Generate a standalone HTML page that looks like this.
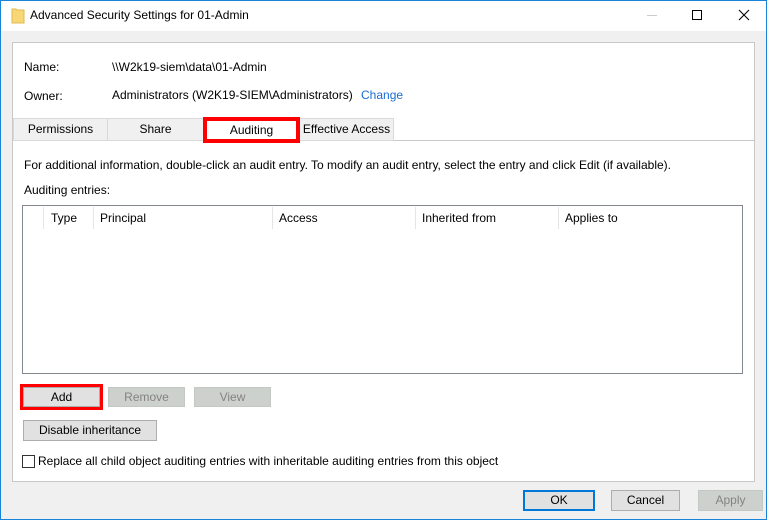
<!DOCTYPE html>
<html><head><style>
*{box-sizing:border-box;margin:0;padding:0}
body{width:767px;height:520px;background:#f0f0f0;font-family:"Liberation Sans",sans-serif;font-size:12px;color:#000;position:relative;overflow:hidden}
.a{position:absolute;white-space:nowrap}
.win{position:absolute;left:0;top:0;width:767px;height:520px;border:1px solid #1883d7}
.btn{position:absolute;background:#e1e1e1;border:1px solid #adadad;text-align:center;line-height:18px}
.dis{background:#cdd1ce;border-color:#c4c8c5;color:#838383}
.tab{position:absolute;top:118px;height:23px;background:#f0f0f0;border:1px solid #d9d9d9;text-align:center;line-height:21px}
</style></head><body>
<div class="a" style="left:0;top:0;width:767px;height:31px;background:#fff"></div>
<div class="win"></div>
<svg class="a" style="left:11px;top:8px" width="14" height="16"><path d="M1 1h4l1 1h7v13H1z" fill="#f8d775" stroke="#e0b94f"/></svg>
<div class="a" style="left:30px;top:8px;font-size:12px">Advanced Security Settings for 01-Admin</div>
<div class="a" style="left:647px;top:15px;width:10px;height:1px;background:#ccc"></div>
<div class="a" style="left:692px;top:10px;width:10px;height:10px;border:1px solid #000"></div>
<svg class="a" style="left:738px;top:9px" width="12" height="12"><path d="M1 1L11 11M11 1L1 11" stroke="#000" stroke-width="1.1"/></svg>
<div class="a" style="left:12px;top:42px;width:743px;height:440px;background:#fff;border:1px solid #c8c8c8"></div>
<div class="a" style="left:24px;top:60px">Name:</div>
<div class="a" style="left:112px;top:60px">\\W2k19-siem\data\01-Admin</div>
<div class="a" style="left:24px;top:89px">Owner:</div>
<div class="a" style="left:112px;top:88px">Administrators (W2K19-SIEM\Administrators)</div>
<div class="a" style="left:361px;top:88px;color:#1a6dd1">Change</div>
<div class="a" style="left:13px;top:140px;width:741px;height:1px;background:#c8c8c8"></div>
<div class="tab" style="left:13px;width:95px">Permissions</div>
<div class="tab" style="left:107px;width:97px">Share</div>
<div class="tab" style="left:299px;width:95px">Effective Access</div>
<div class="a" style="left:203px;top:117px;width:97px;height:26px;background:#fff;border:4px solid #f00;text-align:center;line-height:18px">Auditing</div>
<div class="a" style="left:24px;top:158px">For additional information, double-click an audit entry. To modify an audit entry, select the entry and click Edit (if available).</div>
<div class="a" style="left:24px;top:183px">Auditing entries:</div>
<div class="a" style="left:22px;top:205px;width:721px;height:169px;border:1px solid #828790;background:#fff"></div>
<div class="a" style="left:43px;top:207px;width:1px;height:22px;background:#e5e5e5"></div>
<div class="a" style="left:93px;top:207px;width:1px;height:22px;background:#e5e5e5"></div>
<div class="a" style="left:272px;top:207px;width:1px;height:22px;background:#e5e5e5"></div>
<div class="a" style="left:415px;top:207px;width:1px;height:22px;background:#e5e5e5"></div>
<div class="a" style="left:558px;top:207px;width:1px;height:22px;background:#e5e5e5"></div>
<div class="a" style="left:51px;top:211px">Type</div>
<div class="a" style="left:100px;top:211px">Principal</div>
<div class="a" style="left:279px;top:211px">Access</div>
<div class="a" style="left:422px;top:211px">Inherited from</div>
<div class="a" style="left:565px;top:211px">Applies to</div>
<div class="a" style="left:20px;top:384px;width:83px;height:26px;border:3px solid #f00"></div>
<div class="btn" style="left:23px;top:387px;width:77px;height:20px">Add</div>
<div class="btn dis" style="left:108px;top:387px;width:77px;height:20px">Remove</div>
<div class="btn dis" style="left:194px;top:387px;width:77px;height:20px">View</div>
<div class="btn" style="left:23px;top:420px;width:134px;height:21px">Disable inheritance</div>
<div class="a" style="left:22px;top:455px;width:13px;height:13px;border:1px solid #333;background:#fff"></div>
<div class="a" style="left:38px;top:454px">Replace all child object auditing entries with inheritable auditing entries from this object</div>
<div class="btn" style="left:523px;top:490px;width:72px;height:21px;border:2px solid #0078d7;line-height:17px">OK</div>
<div class="btn" style="left:611px;top:490px;width:69px;height:21px">Cancel</div>
<div class="btn dis" style="left:698px;top:490px;width:65px;height:21px">Apply</div>
</body></html>
